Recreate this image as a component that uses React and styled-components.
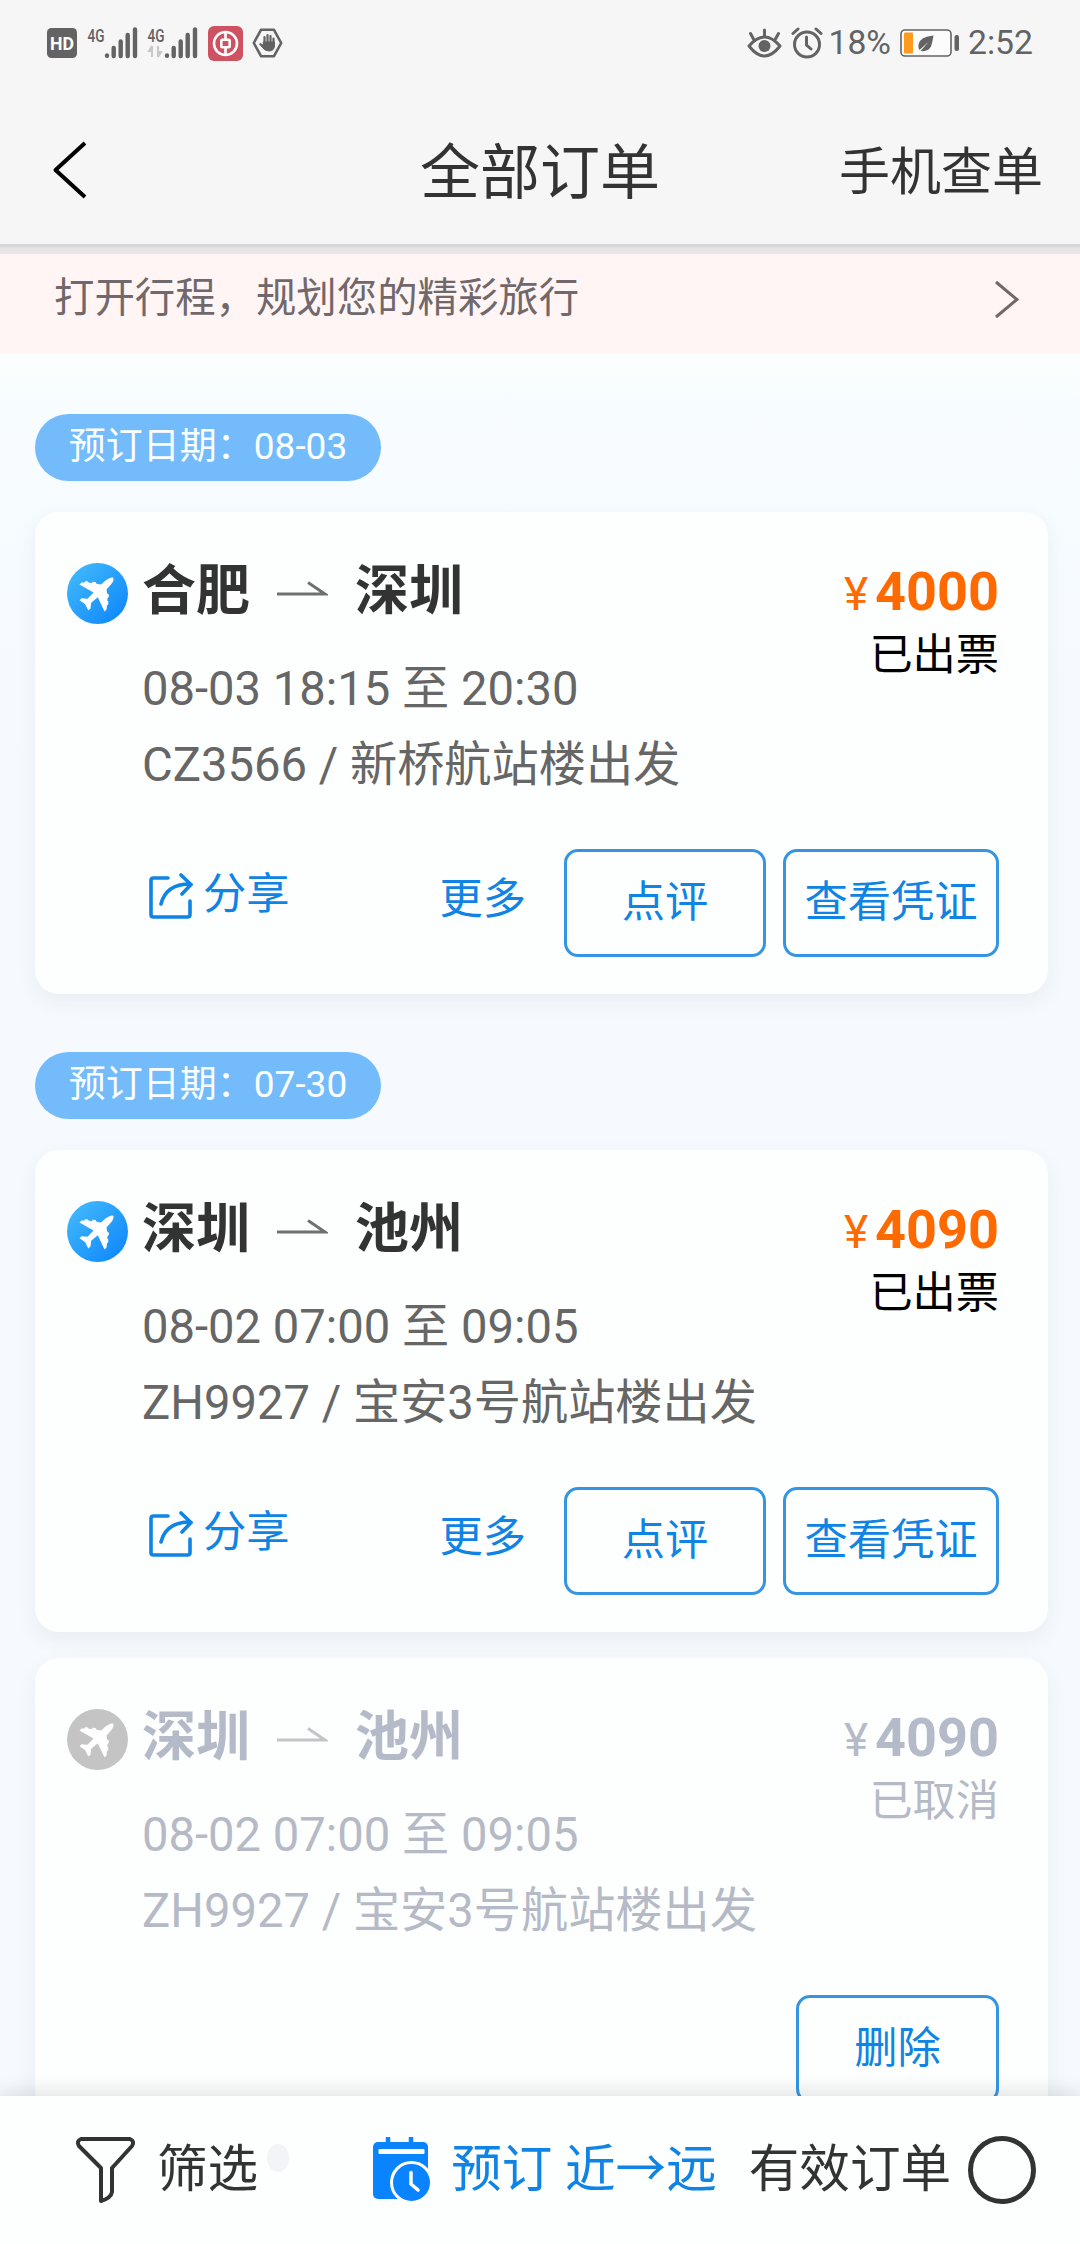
import React from 'react'
import styled, { createGlobalStyle } from 'styled-components'

const GlobalStyle = createGlobalStyle`
    * {
        box-sizing: border-box;
    }

    body {
        margin: 0;
        font-family: Roboto, "Noto Sans CJK SC", sans-serif;
        color: #333;
    }

    svg {
        display: block;
        flex: none;
    }
`

const Screen = styled.div`
    display: flex;
    flex-direction: column;
    width: 1080px;
    height: 2244px;
    overflow: hidden;
    background: #f7faff;
`

const StatusBar = styled.div`
    display: flex;
    justify-content: space-between;
    height: 86px;
    padding: 0 47px;
    background: #f6f6f6;
    color: #636363;
`

const StatusGroup = styled.div`
    display: flex;
    align-items: center;
    gap: ${props => props.$gap}px;
    height: 86px;
`

const StatusText = styled.span`
    margin-left: ${props => props.$left || 0}px;
    font-size: 33.7px;
    line-height: 86px;
`

const Header = styled.header`
    display: grid;
    grid-template-columns: 1fr auto 1fr;
    align-items: center;
    height: 168px;
    padding: 0 37px 0 52px;
    background: linear-gradient(#f6f6f6 158px, #d3d3d3 158px, #dadada 161px, #e6e6e6 162px, #e8e5e5 168px);
`

const Title = styled.h1`
    margin: 8px 0 0 -15px;
    font-size: 60px;
    font-weight: 400;
    line-height: 90px;
`

const HeaderAction = styled.span`
    justify-self: end;
    margin-top: 6px;
    font-size: 51px;
    line-height: 80px;
`

const Banner = styled.div`
    display: flex;
    justify-content: space-between;
    height: 100px;
    padding: 15px 60px 0 54px;
    background: #fff5f5;
    color: #70686a;
    font-size: 40.4px;
    line-height: 60px;
`

const Orders = styled.main`
    flex: 1;
    min-height: 0;
    overflow: hidden;
    padding: 60px 32px 0 35px;
    background: linear-gradient(#fbfffd, #f7fcff 50px, #f6faff 400px);
`

const DatePill = styled.div`
    width: 346px;
    height: 67px;
    margin-bottom: 31px;
    border-radius: 34px;
    background: #74bbfb;
    color: #fbffff;
    font-size: 37px;
    line-height: 65px;
    text-align: center;
`

const Card = styled.section`
    height: 482px;
    margin-bottom: ${props => props.$gap}px;
    padding: 48px 49px 0 32px;
    border-radius: 24px;
    background: #fdfffe;
    box-shadow: 0 8px 20px rgba(60, 65, 75, .07);
    color: ${props => props.$cancelled ? '#b5bac6' : '#666'};
`

const Summary = styled.div`
    display: flex;
    justify-content: space-between;
`

const Route = styled.div`
    display: flex;
    align-items: center;
    height: 63px;
    color: ${props => props.$cancelled ? '#b5bac9' : '#333'};
`

const City = styled.span`
    font-size: 54px;
    font-weight: 700;
    line-height: 63px;
`

const PlaneIcon = styled.svg`
    margin: 4px 14px 0 0;
`

const RouteArrow = styled.svg`
    margin: 0 27px 6px;
    color: ${props => props.$cancelled ? '#c4c4c6' : '#707070'};
`

const Details = styled.div`
    margin: 28px 0 0 75px;
    font-size: 47.2px;
    line-height: 76px;
`

const PriceColumn = styled.div`
    text-align: right;
`

const Price = styled.div`
    color: ${props => props.$cancelled ? '#b5bac9' : '#ff6a00'};
    font-size: 54px;
    font-weight: 700;
    line-height: 63px;
`

const Currency = styled.span`
    margin-right: 7px;
    font-size: 46px;
    font-weight: 400;
`

const Status = styled.div`
    color: ${props => props.$cancelled ? '#b5bac6' : '#000'};
    font-size: 43.2px;
    line-height: 60px;
`

const Actions = styled.div`
    display: flex;
    align-items: center;
    height: 108px;
    margin-top: 46px;
    color: #0f84e4;
    font-size: 43.3px;
`

const Share = styled.span`
    display: flex;
    align-items: flex-start;
    gap: 10px;
    height: 78px;
    padding: 4px 0 0 81px;
    line-height: 54px;

    svg {
        margin-top: 5px;
    }
`

const More = styled.span`
    margin: 0 38px 0 auto;
    padding-bottom: 16px;
`

const ActionButton = styled.button`
    width: ${props => props.$width}px;
    height: 108px;
    margin: 0 0 0 ${props => props.$push ? 'auto' : '17px'};
    padding: 0 0 11px;
    border: 3px solid #3695e2;
    border-radius: 14px;
    background: transparent;
    color: inherit;
    font: inherit;
    white-space: nowrap;

    ${More} + & {
        margin-left: 0;
    }
`

const BottomBar = styled.footer`
    position: relative;
    display: flex;
    align-items: center;
    height: 148px;
    padding: 0 44px 1px 75px;
    background: #fdfefe;
    box-shadow: 0 -4px 18px rgba(40, 40, 40, .14);
    font-size: 50.6px;
    line-height: 76px;
`

const BarLabel = styled.span`
    margin-left: ${props => props.$left}px;
    padding-top: 1px;
    color: ${props => props.$active ? '#0f84e4' : 'inherit'};
    white-space: pre;
`

const FilterDot = styled.i`
    width: 22px;
    height: 28px;
    margin: -24px 83px 0 9px;
    border-radius: 50%;
    background: #f3f4f7;
`

const RadioRing = styled.i`
    width: 68px;
    height: 68px;
    margin-left: auto;
    border: 5px solid #333;
    border-radius: 50%;
`

const Signal = ({ data }) => (
    <svg width="51" height="42" viewBox="0 -4 51 42" fill="currentColor">
        <text x="0.5" y="15.500" fontSize="18.500" fontWeight="500" textLength="17" lengthAdjust="spacingAndGlyphs">4G</text>
        {data && <path d="M5 20v11M5 20l-3 5h3M11 31V20M11 31l3-5h-3" stroke="#c9c9c9" strokeWidth="2" fill="#c9c9c9" />}
        <path d="M20 29.500v.3M26.700 22v8M33.700 15.500v14.500M40.700 9v21M48 3.500v26.500" stroke="currentColor" strokeWidth="4.400" strokeLinecap="round" />
    </svg>
)

const Plane = ({ cancelled }) => {
    const id = cancelled ? 'planeGrey' : 'planeBlue'
    return (
        <PlaneIcon width="61" height="61" viewBox="0 0 61 61">
            <linearGradient id={id} x1="0" y1="0" x2="1" y2="1">
                <stop offset="0" stopColor={cancelled ? '#c4c4c4' : '#46bdfc'} />
                <stop offset="1" stopColor={cancelled ? '#c4c4c4' : '#0a83fb'} />
            </linearGradient>
            <circle cx="30.500" cy="30.500" r="30.500" fill={`url(#${id})`} />
            <path
                d="M46 14.500C44 14 41 15.500 38.500 17.500L34 21.500 29.500 20.800 28.500 19 25.500 18.800 25 20.200 21.500 19.600 20.500 18.300 18 18.300 17.500 19.500 14.500 19.500 12.500 21.500 26.500 29.500 20.500 35.800 14.500 35.200 12.500 37.200 18 41 21.300 47.500 23.500 45.500 24.200 39.800 30.800 34.200 37.500 48.500 39.500 46.500 40 42.500 41.300 41 41.300 38.500 40.300 37.500 40.600 35 41.800 34 41.800 31.500 40.200 30.500 39.500 26.500 43.500 22C46 19.500 47.300 16.500 46 14.500Z"
                fill="#fff"
            />
        </PlaneIcon>
    )
}

const orders = [
    {
        id: 1,
        date: '08-03',
        from: '合肥',
        to: '深圳',
        time: '08-03 18:15 至 20:30',
        flight: 'CZ3566 / 新桥航站楼出发',
        price: 4000,
        status: '已出票',
        gap: 58,
    },
    {
        id: 2,
        date: '07-30',
        from: '深圳',
        to: '池州',
        time: '08-02 07:00 至 09:05',
        flight: 'ZH9927 / 宝安3号航站楼出发',
        price: 4090,
        status: '已出票',
        gap: 26,
    },
    {
        id: 3,
        from: '深圳',
        to: '池州',
        time: '08-02 07:00 至 09:05',
        flight: 'ZH9927 / 宝安3号航站楼出发',
        price: 4090,
        status: '已取消',
        cancelled: true,
        gap: 26,
    },
]

const OrderCard = ({ order }) => (
    <Card $cancelled={order.cancelled} $gap={order.gap}>
        <Summary>
            <div>
                <Route $cancelled={order.cancelled}>
                    <Plane cancelled={order.cancelled} />
                    <City>{order.from}</City>
                    <RouteArrow $cancelled={order.cancelled} width="51" height="16" viewBox="0 0 51 16">
                        <path d="M0 13h48L31 1.500" fill="none" stroke="currentColor" strokeWidth="3" />
                    </RouteArrow>
                    <City>{order.to}</City>
                </Route>
                <Details>
                    <div>{order.time}</div>
                    <div>{order.flight}</div>
                </Details>
            </div>
            <PriceColumn>
                <Price $cancelled={order.cancelled}><Currency>¥</Currency>{order.price}</Price>
                <Status $cancelled={order.cancelled}>{order.status}</Status>
            </PriceColumn>
        </Summary>
        {order.cancelled
            ? <Actions>
                <ActionButton $width={203} $push>删除</ActionButton>
            </Actions>
            : <Actions>
                <Share>
                    <svg width="45" height="46" viewBox="0 0 45 46" fill="none" stroke="currentColor" strokeWidth="3.600" strokeLinecap="round">
                        <path d="M20 5H5.500Q3 5 3 7.500V41.500Q3 44 5.500 44H39.500Q42 44 42 41.500V28" />
                        <path d="M13 31Q18 11 42 11M33 2L43 11.500 34 21" />
                    </svg>
                    分享
                </Share>
                <More>更多</More>
                <ActionButton $width={202}>点评</ActionButton>
                <ActionButton $width={216}>查看凭证</ActionButton>
            </Actions>}
    </Card>
)

const App = () => (
    <Screen>
        <GlobalStyle />
        <StatusBar>
            <StatusGroup $gap={9.5}>
                <svg width="30" height="30" viewBox="0 0 30 30">
                    <rect width="30" height="30" rx="4.500" fill="currentColor" />
                    <text x="3" y="22" fontSize="19" fontWeight="700" fill="#fff" textLength="24" lengthAdjust="spacingAndGlyphs">HD</text>
                </svg>
                <Signal />
                <Signal data />
                <svg width="35" height="35" viewBox="0 0 35 35" fill="none" stroke="#fff" strokeWidth="2.600">
                    <rect width="35" height="35" rx="6" fill="#cf5262" stroke="none" />
                    <circle cx="17.500" cy="17.500" r="11.500" />
                    <rect x="13.300" y="13.800" width="8.400" height="7.400" rx="1" />
                    <path d="M17.500 5v8M17.500 22v8" />
                </svg>
                <svg width="31" height="30" viewBox="0 0 31 30" fill="none" stroke="currentColor" strokeLinecap="round" strokeLinejoin="round">
                    <path d="M9 1.800H22L29.200 15 22 28.200H9L1.800 15Z" strokeWidth="2.600" />
                    <path d="M12.500 16V9M15.500 15V7M18.500 15V8M21.500 16V10.500" strokeWidth="2.200" />
                    <path d="M11.500 14H22.500V18Q22 23 17 23Q13 23 11 20L7.500 16 8.500 15.500 11.500 17.500Z" fill="currentColor" strokeWidth="1" />
                </svg>
            </StatusGroup>
            <StatusGroup $gap={9}>
                <svg width="35" height="32" viewBox="0 0 35 32" fill="none" stroke="currentColor" strokeWidth="3" strokeLinecap="round">
                    <path d="M2 19Q17.500 1 33 19Q17.500 39 2 19Z" strokeLinejoin="round" />
                    <path d="M17.500 9V3M6.500 12L3.500 6.500M28.500 12L31.500 6.500" />
                    <circle cx="17.500" cy="19" r="6" fill="currentColor" stroke="none" />
                </svg>
                <svg width="32" height="32" viewBox="0 0 32 32" fill="none" stroke="currentColor" strokeWidth="3" strokeLinecap="round">
                    <circle cx="16" cy="17.500" r="12.500" />
                    <path d="M15.500 10V18L20 22M2 6.500L7 2M30 6.500L25 2" />
                </svg>
                <StatusText $left={-4}>18%</StatusText>
                <svg width="59" height="28" viewBox="0 0 59 28">
                    <rect x="1" y="1" width="50" height="26" rx="4" fill="#fcfcfc" stroke="currentColor" strokeWidth="1.600" />
                    <rect x="4" y="3.500" width="9" height="21" rx="1" fill="#ff9a1f" />
                    <path d="M33.500 6.500Q20 7.500 18.500 15.500 18 19 19.500 21L29 12.500 20.500 22Q28 23 31 17.500 32.500 13 33.500 6.500Z" fill="currentColor" />
                    <rect x="54.500" y="6" width="4.500" height="16" rx="2" fill="currentColor" />
                </svg>
                <StatusText>2:52</StatusText>
            </StatusGroup>
        </StatusBar>
        <Header>
            <svg width="36" height="58" viewBox="0 0 36 58" fill="none" stroke="#000" strokeWidth="4">
                <path d="M33 2L3.500 29 33 56" strokeLinejoin="round" />
            </svg>
            <Title>全部订单</Title>
            <HeaderAction>手机查单</HeaderAction>
        </Header>
        <Banner>
            打开行程，规划您的精彩旅行
            <svg width="26" height="60" viewBox="0 0 26 60" fill="none" stroke="currentColor" strokeWidth="3">
                <path d="M2 13L23 30.500 2 48" />
            </svg>
        </Banner>
        <Orders>
            {orders.map(order =>
                <React.Fragment key={order.id}>
                    {order.date && <DatePill>预订日期：{order.date}</DatePill>}
                    <OrderCard order={order} />
                </React.Fragment>
            )}
        </Orders>
        <BottomBar>
            <svg width="61" height="68" viewBox="0 0 61 68" fill="none" stroke="#333" strokeWidth="4" strokeLinejoin="round">
                <path d="M6 3H55Q60 5 57 10L37 32V56Q36 62 26 65V32L4 10Q1 5 6 3Z" />
            </svg>
            <BarLabel $left={21}>筛选</BarLabel>
            <FilterDot />
            <svg width="60" height="66" viewBox="0 0 60 66">
                <path d="M16 0v8M39 0v8" stroke="#0a84fe" strokeWidth="4.500" />
                <rect x="1" y="5" width="55" height="57" rx="5" fill="#0a84fe" />
                <rect x="6.500" y="12" width="46" height="5" rx="1" fill="#fff" />
                <circle cx="39.500" cy="45.500" r="20" fill="#0a84fe" stroke="#fff" strokeWidth="3" />
                <path d="M39 35.500V47L46 53" fill="none" stroke="#fff" strokeWidth="3.500" strokeLinecap="round" />
            </svg>
            <BarLabel $left={19} $active>预订 近→远</BarLabel>
            <BarLabel $left={32}>有效订单</BarLabel>
            <RadioRing />
        </BottomBar>
    </Screen>
)

export default App
